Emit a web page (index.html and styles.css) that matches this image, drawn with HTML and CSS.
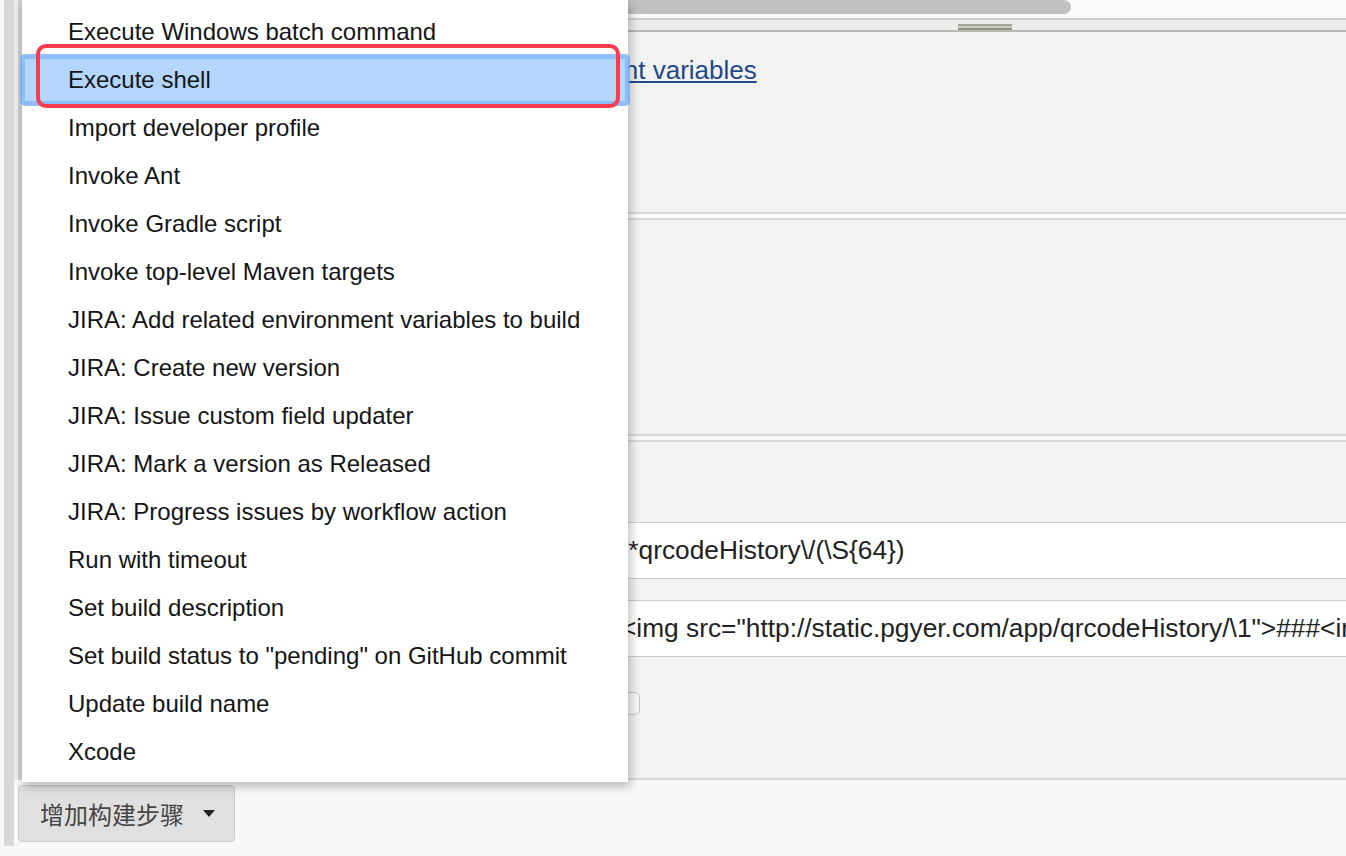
FILE: index.html
```html
<!DOCTYPE html>
<html lang="zh-CN">
<head>
<meta charset="utf-8">
<title>Build steps</title>
<link rel="stylesheet" href="styles.css">
</head>
<body>
<div class="page">
  <div class="rail"></div>
  <div class="main">
    <div class="panel">
      <div class="panel-inner">
        <div class="hscroll"><div class="thumb"></div></div>
        <div class="splitter"><span class="grip"></span></div>
        <section class="sec sec1">
          <a class="env-link" href="#">Inject environment variables</a>
        </section>
        <div class="sep"></div>
        <section class="sec sec2"></section>
        <div class="sep"></div>
        <section class="sec sec3">
          <div class="row row-input">
            <div class="label"></div>
            <div class="field"><input class="text" type="text" value=".*qrcodeHistory\/(\S{64})"></div>
          </div>
          <div class="row row-input">
            <div class="label"></div>
            <div class="field"><input class="text" type="text" value="&lt;img src=&quot;http://static.pgyer.com/app/qrcodeHistory/\1&quot;&gt;###&lt;img src=&quot;http://static.pgyer.com/app/qrcodeHistory/\1&quot;&gt;"></div>
          </div>
          <div class="row row-check">
            <div class="label"></div>
            <div class="field"><span class="checkbox"></span></div>
          </div>
        </section>
      </div>
    </div>
    <div class="actions">
      <button class="add-step" type="button">增加构建步骤<span class="caret"></span></button>
    </div>
  </div>

  <ul class="menu">
    <li>Execute Windows batch command</li>
    <li class="selected">Execute shell</li>
    <li>Import developer profile</li>
    <li>Invoke Ant</li>
    <li>Invoke Gradle script</li>
    <li>Invoke top-level Maven targets</li>
    <li>JIRA: Add related environment variables to build</li>
    <li>JIRA: Create new version</li>
    <li>JIRA: Issue custom field updater</li>
    <li>JIRA: Mark a version as Released</li>
    <li>JIRA: Progress issues by workflow action</li>
    <li>Run with timeout</li>
    <li>Set build description</li>
    <li>Set build status to "pending" on GitHub commit</li>
    <li>Update build name</li>
    <li>Xcode</li>
  </ul>
  <div class="annotation"></div>
</div>
</body>
</html>
```

FILE: styles.css
```css
html, body {
  margin: 0;
  padding: 0;
  overflow: hidden;
  background: #f8f8f8;
  font-family: "Liberation Sans", Arial, "Noto Sans CJK SC", sans-serif;
}

.page {
  position: relative;
  display: flex;
  width: 1346px;
  height: 856px;
}

.rail {
  width: 10px;
  height: 846px;
  border-left: 4px solid #f8f8f8;
  background: #d8d8d8;
  flex: none;
}

.main {
  flex: 1;
  display: flex;
  flex-direction: column;
  min-width: 0;
}

.panel {
  border-left: 4px solid #ebebeb;
}

.panel-inner {
  border-left: 4px solid #cfcfcf;
  background: #f2f2f2;
}

.hscroll {
  height: 18px;
  background: #fafafa;
}

.thumb {
  width: 1049px;
  height: 14px;
  border-radius: 0 7px 7px 0;
  background: #c1c1c1;
}

.splitter {
  height: 10px;
  border-top: 2px solid #d0d0d0;
  border-bottom: 2px solid #b8b9b0;
  background: #ececec;
  display: flex;
  align-items: flex-start;
}

.grip {
  margin-left: 936px;
  margin-top: 4px;
  width: 54px;
  height: 2px;
  border-top: 2px solid #a3a49c;
  border-bottom: 2px solid #8f9088;
  background: #c9cac2;
}

.sec1 {
  height: 180px;
  box-sizing: border-box;
  padding: 23px 0 0 411px;
}

.env-link {
  font-size: 26px;
  line-height: 30px;
  color: #204a87;
  text-decoration: underline;
  white-space: nowrap;
}

.sep {
  height: 4px;
  border-top: 2px solid #d8d8d8;
  border-bottom: 2px solid #d8d8d8;
  background: #fafafa;
}

.sec2 {
  height: 214px;
}

.sec3 {
  height: 338px;
  box-sizing: border-box;
  padding-top: 80px;
  border-bottom: 2px solid #d8d8d8;
}

.row {
  display: flex;
}

.label {
  width: 593px;
  flex: none;
}

.field {
  flex: 1;
  min-width: 0;
}

.row-input + .row-input {
  margin-top: 21px;
}

.text {
  display: block;
  box-sizing: border-box;
  width: 100%;
  height: 57px;
  margin: 0;
  padding: 0 0 0 5px;
  border: 1px solid #cccccc;
  border-right: 0;
  background: #ffffff;
  font-family: "Liberation Sans", Arial, sans-serif;
  font-size: 26.3px;
  color: #222222;
  outline: none;
}

.row-check {
  margin-top: 35px;
}

.checkbox {
  display: block;
  margin-left: 2px;
  width: 21px;
  height: 21px;
  border: 1px solid #c6c6c6;
  border-radius: 5px;
  background: #f7f7f7;
}

.actions {
  padding: 5px 0 0 4px;
}

.add-step {
  display: flex;
  align-items: center;
  height: 57px;
  width: 217px;
  box-sizing: border-box;
  padding: 0 0 0 21px;
  border: 1px solid #cbcbcb;
  border-radius: 4px;
  background: #e0e0e0;
  color: #454545;
  font-family: "Noto Sans CJK SC", "Liberation Sans", sans-serif;
  font-size: 24px;
  cursor: pointer;
}

.caret {
  margin-left: 19px;
  width: 0;
  height: 0;
  border-left: 6.5px solid transparent;
  border-right: 6.5px solid transparent;
  border-top: 7px solid #222222;
}

.menu {
  position: absolute;
  left: 22px;
  top: 0;
  width: 606px;
  height: 782px;
  box-sizing: border-box;
  margin: 0;
  padding: 8px 0 6px;
  list-style: none;
  background: #ffffff;
  box-shadow: 2px 4px 10px rgba(0, 0, 0, 0.28);
}

.menu li {
  height: 48px;
  line-height: 48px;
  padding-left: 46px;
  font-size: 24px;
  color: #151515;
  white-space: nowrap;
}

.menu li.selected {
  background: #b4d5fc;
  border-radius: 3px;
  box-shadow: 0 0 0 2px rgba(108, 170, 248, 0.75), inset 0 0 0 3px rgba(108, 170, 248, 0.55);
}

.annotation {
  position: absolute;
  left: 36px;
  top: 44px;
  width: 576px;
  height: 56px;
  border: 4px solid #fb3a4e;
  border-radius: 10px;
}
```
